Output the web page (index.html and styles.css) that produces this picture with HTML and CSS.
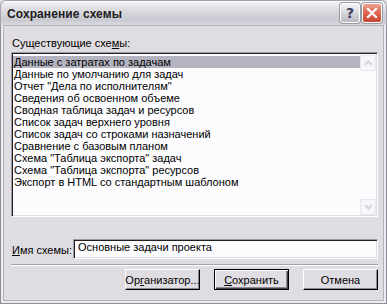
FILE: index.html
```html
<!DOCTYPE html>
<html lang="ru">
<head>
<meta charset="utf-8">
<title>Сохранение схемы</title>
<link rel="stylesheet" href="styles.css">
</head>
<body>
<div class="window">
  <div class="titlebar">
    <span class="title">Сохранение схемы</span>
    <div class="caption-buttons">
      <div class="cap-btn help">?</div>
      <div class="cap-btn close">
        <svg width="12" height="12" viewBox="0 0 12 12"><path d="M2 2 L10 10 M10 2 L2 10" stroke="#fff" stroke-width="2.2" stroke-linecap="square"/></svg>
      </div>
    </div>
  </div>
  <div class="frame">
    <div class="panel">
      <div class="label">Существующие схе<u>м</u>ы:</div>
      <div class="listbox">
        <ul class="items">
          <li class="selected">Данные с затратах по задачам</li>
          <li>Данные по умолчанию для задач</li>
          <li>Отчет "Дела по исполнителям"</li>
          <li>Сведения об освоенном объеме</li>
          <li>Сводная таблица задач и ресурсов</li>
          <li>Список задач верхнего уровня</li>
          <li>Список задач со строками назначений</li>
          <li>Сравнение с базовым планом</li>
          <li>Схема "Таблица экспорта" задач</li>
          <li>Схема "Таблица экспорта" ресурсов</li>
          <li>Экспорт в HTML со стандартным шаблоном</li>
        </ul>
        <div class="scrollbar">
          <div class="arrow">
            <svg width="9" height="6" viewBox="0 0 9 6"><path d="M1 5 L4.5 1.5 L8 5" fill="none" stroke="#d4d4dc" stroke-width="2"/></svg>
          </div>
          <div class="track"></div>
          <div class="arrow">
            <svg width="9" height="6" viewBox="0 0 9 6"><path d="M1 1 L4.5 4.5 L8 1" fill="none" stroke="#d4d4dc" stroke-width="2"/></svg>
          </div>
        </div>
      </div>
      <div class="name-row">
        <div class="name-label"><u>И</u>мя схемы:</div>
        <div class="textbox">Основные задачи проекта</div>
      </div>
      <div class="separator"></div>
      <div class="buttons">
        <div class="btn">Ор<u>г</u>анизатор...</div>
        <div class="btn default"><u>С</u>охранить</div>
        <div class="btn">Отмена</div>
      </div>
    </div>
  </div>
</div>
</body>
</html>
```
FILE: styles.css
```css
* { box-sizing: border-box; }
html, body { margin: 0; padding: 0; }
body {
  width: 387px;
  height: 304px;
  overflow: hidden;
  background: #e0dde2;
  font-family: "Liberation Sans", Arial, sans-serif;
  font-size: 11px;
  color: #000;
}
.window {
  width: 387px;
  height: 304px;
  display: flex;
  flex-direction: column;
}
.titlebar {
  height: 25px;
  flex: none;
  display: flex;
  align-items: flex-start;
  justify-content: space-between;
  padding: 0 4px 0 6px;
  border-radius: 6px 6px 0 0;
  border: 1px solid #a4a4ac;
  border-bottom: none;
  background: linear-gradient(to bottom, #fdfdfd 0px, #ececf0 3px, #dcdce0 9px, #d0d0d8 15px, #c9c9d1 19px, #d6d6dc 23px, #e0dfe3 25px);
}
.title {
  font-weight: bold;
  font-size: 12px;
  line-height: 15px;
  margin-top: 6px;
  color: #202020;
  letter-spacing: 0.1px;
}
.caption-buttons {
  display: flex;
  gap: 2px;
  margin-top: 2px;
}
.cap-btn {
  width: 20px;
  height: 20px;
  border: 1px solid #ffffff;
  border-radius: 3px;
  display: flex;
  align-items: center;
  justify-content: center;
  box-shadow: 0 0 0 1px #9a9aa4;
}
.help {
  background: linear-gradient(to bottom, #f4f4f6, #d0d0d8 60%, #b8b8c2);
  color: #3c3c5c;
  font-weight: bold;
  font-size: 14px;
  font-family: "DejaVu Sans", sans-serif;
}
.close {
  background: linear-gradient(to bottom, #eea090, #d8604c 55%, #c84834);
}
.frame {
  flex: 1;
  padding: 0 2px 2px 2px;
  border: 1px solid #8e8e98;
  border-top: none;
  background: #ecebef;
  display: flex;
}
.panel {
  flex: 1;
  border: 1px solid #b4b2ba;
  background: #e0dde2;
  padding: 11px 5px 0 7px;
  display: flex;
  flex-direction: column;
}
.label {
  line-height: 13px;
  padding-left: 1px;
  margin-bottom: 2px;
}
u { text-decoration: underline; text-underline-offset: 1px; }
.listbox {
  height: 165px;
  flex: none;
  display: flex;
  background: #fcfcfe;
  border: 1px solid;
  border-color: #9c9aa2 #ffffff #ffffff #9c9aa2;
  box-shadow: inset 1px 1px 0 #202020, inset -1px -1px 0 #e0dde2;
  padding: 2px 1px 1px 1px;
}
.items {
  flex: 1;
  list-style: none;
  margin: 0;
  padding: 1px 0 0 0;
}
.items li {
  height: 12px;
  line-height: 12px;
  padding-left: 1px;
  white-space: nowrap;
  overflow: hidden;
}
.items li.selected {
  background: #b4b4c0;
}
.scrollbar {
  width: 16px;
  display: flex;
  flex-direction: column;
}
.arrow {
  width: 16px;
  height: 16px;
  border: 1px solid #e6e6ec;
  border-radius: 2px;
  background: #f6f6f8;
  display: flex;
  align-items: center;
  justify-content: center;
}
.track { flex: 1; }
.name-row {
  margin-top: 22px;
  display: flex;
  align-items: center;
}
.name-label {
  width: 62px;
  padding-left: 1px;
  padding-top: 3px;
  line-height: 13px;
}
.textbox {
  flex: 1;
  height: 20px;
  background: #fcfcfe;
  border: 1px solid;
  border-color: #9c9aa2 #ffffff #ffffff #9c9aa2;
  box-shadow: inset 1px 1px 0 #202020, inset -1px -1px 0 #e0dde2;
  padding: 1px 3px 0 4px;
  line-height: 13px;
}
.separator {
  margin-top: 5px;
  height: 2px;
  border-top: 1px solid #a4a2aa;
  border-bottom: 1px solid #ffffff;
}
.buttons {
  margin-top: 3px;
  display: flex;
  justify-content: flex-end;
  gap: 14px;
}
.btn {
  width: 75px;
  height: 21px;
  display: flex;
  align-items: center;
  justify-content: center;
  background: #e0dde2;
  border: 1px solid;
  border-color: #ffffff #000000 #000000 #ffffff;
  box-shadow: inset -1px -1px 0 #8c8a92;
  padding-top: 1px;
}
.btn.default {
  border: 1px solid #000;
  box-shadow: inset 1px 1px 0 #ffffff, inset -1px -1px 0 #404040, inset -2px -2px 0 #8c8a92;
}
```
